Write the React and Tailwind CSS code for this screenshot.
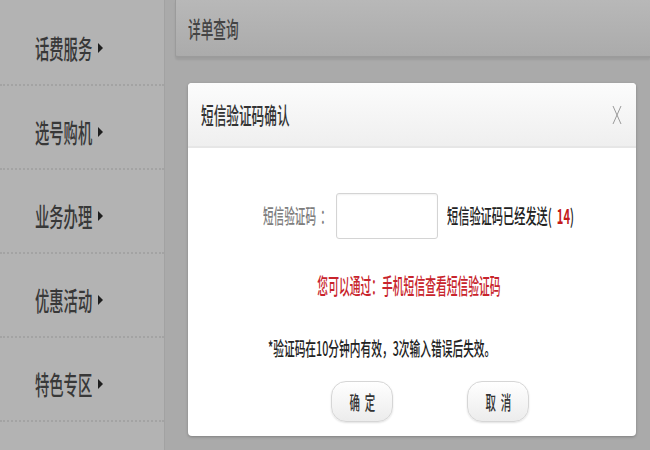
import React from 'react'

const menu = ['话费服务', '选号购机', '业务办理', '优惠活动', '特色专区']

export default function App() {
  return (
    <div className="w-[650px] h-[450px] flex overflow-hidden bg-[#aaaaaa] font-medium font-['Noto_Sans_CJK_SC',sans-serif]">

      {/* left menu */}
      <div className="w-[165px] shrink-0 pt-[2px] bg-[#b3b3b3] border-r border-[#a2a2a2]">
        {menu.map(m => (
          <div key={m} className="h-[84px] pt-[10px] pl-[35px] flex items-center border-b-2 border-dotted border-[#a3a3a3]">
            <span className="w-[61px] shrink-0 text-[26px] leading-none text-[#383838]">
              <span className="inline-block whitespace-nowrap origin-left scale-x-55">{m}</span>
            </span>
            <svg width="5" height="10" viewBox="0 0 5 10" className="ml-[2px] shrink-0">
              <path d="M0 0L5 5L0 10Z" fill="#1f1f1f" />
            </svg>
          </div>
        ))}
      </div>

      <div className="flex-1 flex flex-col pl-[10px]">
        {/* top bar */}
        <div className="h-[58px] shrink-0 flex items-center pl-[12px] bg-gradient-to-b from-[#b8b8b8] to-[#ababab] border-l border-b-2 border-[#9b9b9b] rounded-bl-[3px] shadow-[0_2px_2px_rgba(0,0,0,0.08)]">
          <span className="text-[23px] leading-none text-[#444]">
            <span className="inline-block whitespace-nowrap origin-left scale-x-55">详单查询</span>
          </span>
        </div>

        {/* dialog */}
        <div className="ml-[13px] mt-[25px] w-[448px] h-[353px] shrink-0 bg-white rounded-[4px] shadow-[0_1px_3px_rgba(0,0,0,0.25)] flex flex-col overflow-hidden">
          <div className="h-[65px] shrink-0 flex items-center justify-between pl-[13px] pr-[14px] bg-gradient-to-b from-[#fcfcfc] to-[#efefef] border-b-2 border-[#e6e6e6]">
            <span className="text-[23px] leading-none text-[#333]">
              <span className="inline-block whitespace-nowrap origin-left scale-x-55">短信验证码确认</span>
            </span>
            <svg width="10" height="20" viewBox="0 0 10 20">
              <path d="M1 1L9 19M9 1L1 19" stroke="#9a9a9a" strokeWidth="1" fill="none" />
            </svg>
          </div>

          <div className="flex flex-col pt-[45px]">
            <div className="h-[46px] flex items-center pl-[75px]">
              <span className="w-[73px] shrink-0 text-[20px] leading-none text-[#7d7d7d]">
                <span className="inline-block whitespace-nowrap origin-left scale-x-53">短信验证码<span className="pl-[8px]">：</span></span>
              </span>
              <div className="w-[102px] h-[46px] shrink-0 border border-[#d4d4d4] rounded-[3px] shadow-[inset_0_1px_2px_rgba(0,0,0,0.06)]" />
              <span className="ml-[9px] shrink-0 text-[20px] leading-none text-[#222]">
                <span className="inline-block whitespace-nowrap origin-left scale-x-56">
                  短信验证码已经发送(&nbsp;&nbsp;<b className="text-[#c41a1a]">14</b>)
                </span>
              </span>
            </div>

            <div className="mt-[34px] h-[22px] flex items-center justify-center pr-[6px]">
              <span className="text-[22px] leading-none text-[#c8242c]">
                <span className="inline-block whitespace-nowrap origin-center scale-x-49">您可以通过：手机短信查看短信验证码</span>
              </span>
            </div>

            <div className="mt-[42px] h-[22px] flex items-center pl-[80px]">
              <span className="text-[19.5px] leading-none text-[#222]">
                <span className="inline-block whitespace-nowrap origin-left scale-x-55">*验证码在10分钟内有效，3次输入错误后失效。</span>
              </span>
            </div>

            <div className="mt-[22px] flex pl-[143px] gap-[74px]">
              <button className="w-[62px] h-[41px] shrink-0 rounded-[15px] border border-[#d6d6d6] bg-gradient-to-b from-white to-[#ececec] shadow-[0_1px_2px_rgba(0,0,0,0.12)] flex items-center justify-center">
                <span className="text-[19px] leading-none text-[#333]">
                  <span className="inline-block whitespace-nowrap origin-center scale-x-55">确&nbsp;&nbsp;定</span>
                </span>
              </button>
              <button className="w-[62px] h-[41px] shrink-0 rounded-[15px] border border-[#d6d6d6] bg-gradient-to-b from-white to-[#ececec] shadow-[0_1px_2px_rgba(0,0,0,0.12)] flex items-center justify-center">
                <span className="text-[19px] leading-none text-[#333]">
                  <span className="inline-block whitespace-nowrap origin-center scale-x-55">取&nbsp;&nbsp;消</span>
                </span>
              </button>
            </div>
          </div>
        </div>
      </div>
    </div>
  )
}
